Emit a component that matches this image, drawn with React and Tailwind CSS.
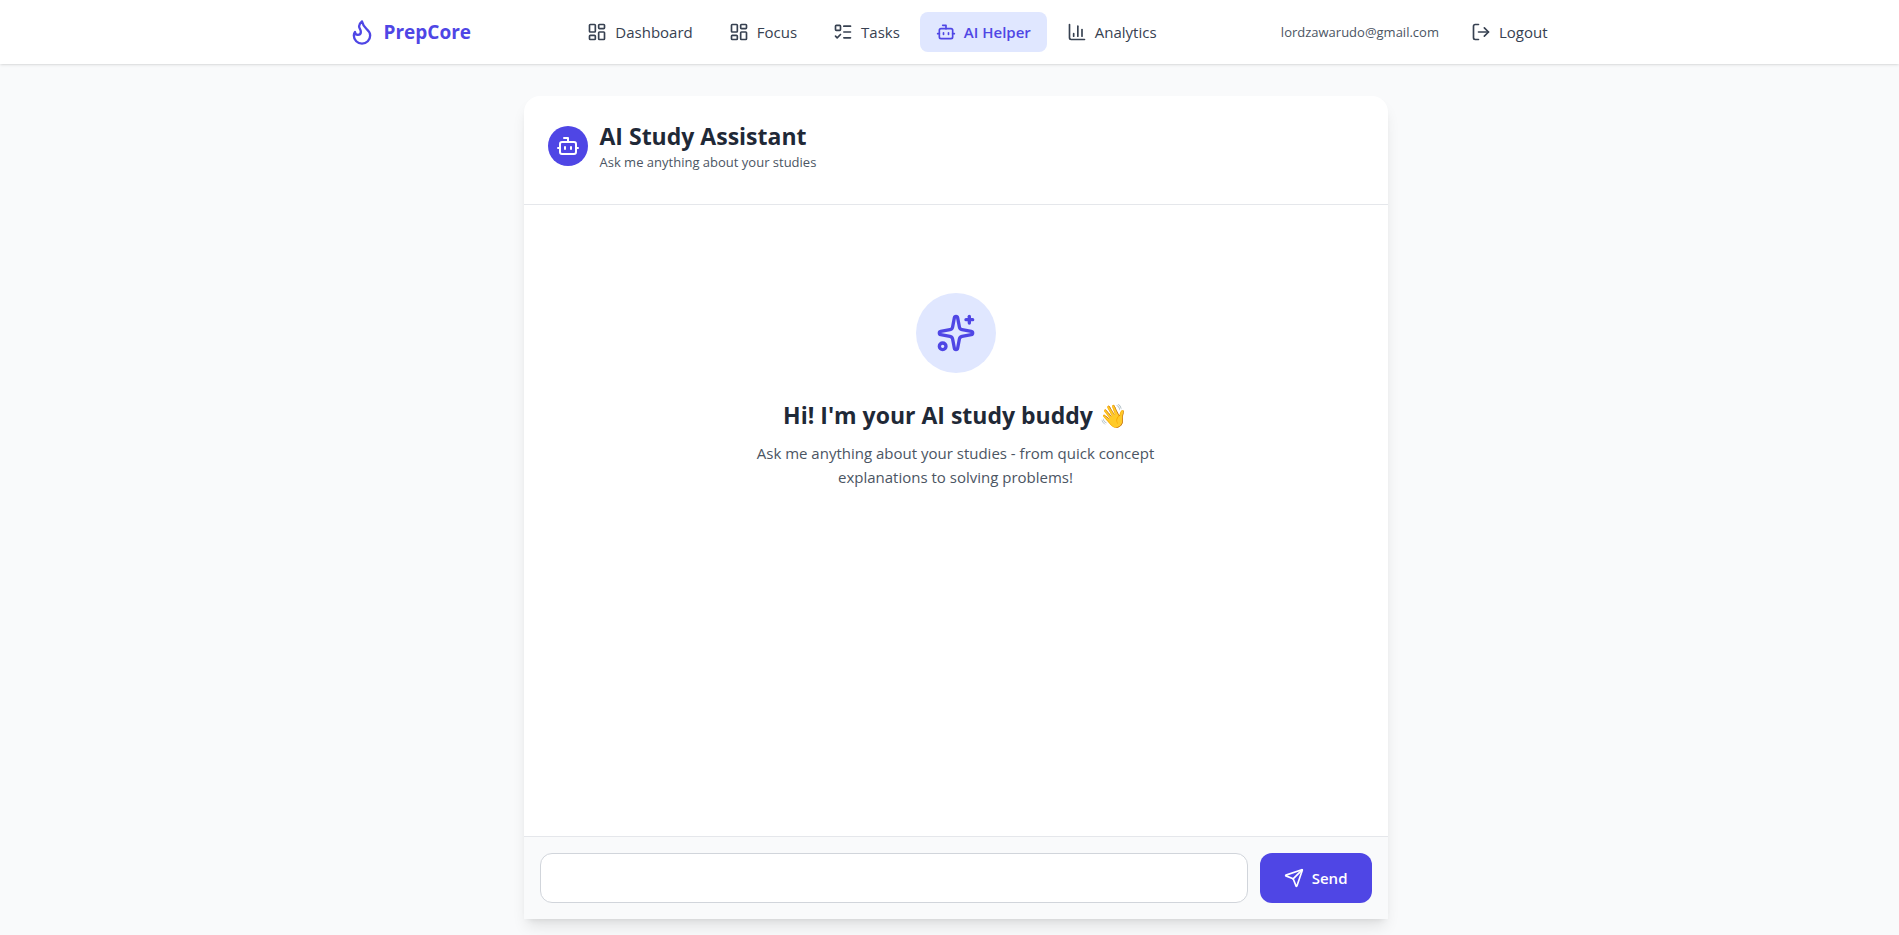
import React, { useState } from 'react';
import { Bot, Flame, LayoutDashboard, ListTodo, LogOut, Send, Sparkles } from 'lucide-react';

// bar chart with short bars inside the axis
const AnalyticsIcon = ({ className }) => (
    <svg
        viewBox="0 0 24 24"
        fill="none"
        stroke="currentColor"
        strokeWidth="2"
        strokeLinecap="round"
        strokeLinejoin="round"
        className={className}
    >
        <path d="M3 3v16a2 2 0 0 0 2 2h16" />
        <path d="M8 17v-3" />
        <path d="M13 17V5" />
        <path d="M18 17V9" />
    </svg>
);

const links = [
    { name: 'Dashboard', icon: LayoutDashboard },
    { name: 'Focus', icon: LayoutDashboard },
    { name: 'Tasks', icon: ListTodo },
    { name: 'AI Helper', icon: Bot, active: true },
    { name: 'Analytics', icon: AnalyticsIcon },
];

const Navbar = () => (
    <header className="bg-white shadow-sm pl-3">
        <div className="max-w-7xl mx-auto px-8 h-16 flex items-center justify-between">
            <a href="#" className="flex items-center gap-2 text-[#4f46e5]">
                <Flame className="w-7 h-7" />
                <span className="text-[19px] leading-7 font-bold">PrepCore</span>
            </a>
            <nav className="flex items-center gap-1 pr-2">
                {links.map(({ name, icon: Icon, active }) => (
                    <a
                        key={name}
                        href="#"
                        className={
                            active
                                ? 'flex items-center gap-2 px-4 py-2 rounded-lg text-[15px] leading-6 font-semibold bg-[#e0e7ff] text-[#4f46e5]'
                                : 'flex items-center gap-2 px-4 py-2 rounded-lg text-[15px] leading-6 text-[#374151] hover:bg-gray-100'
                        }
                    >
                        <Icon className="w-5 h-5" />
                        {name}
                    </a>
                ))}
            </nav>
            <div className="flex items-center gap-4">
                <span className="text-[13px] leading-5 text-[#4b5563]">lordzawarudo@gmail.com</span>
                <button
                    type="button"
                    className="flex items-center gap-2 px-4 py-2 rounded-lg text-[15px] leading-6 text-[#374151] hover:bg-gray-100"
                >
                    <LogOut className="w-5 h-5" />
                    Logout
                </button>
            </div>
        </div>
    </header>
);

const Welcome = () => (
    <div className="flex-1 overflow-y-auto px-6 pt-22 text-center">
        <div className="w-20 h-20 mx-auto mb-6 rounded-full bg-[#e0e7ff] flex items-center justify-center">
            <Sparkles className="w-10 h-10 text-[#4f46e5]" />
        </div>
        <h2 className="mb-2 text-[23px] leading-9 font-bold text-[#1f2937]">
            Hi! I'm your AI study buddy 👋
        </h2>
        <p className="max-w-md mx-auto text-[15px] leading-6 text-[#4b5563]">
            Ask me anything about your studies - from quick concept explanations to solving problems!
        </p>
    </div>
);

export default function App() {
    const [message, setMessage] = useState('');

    return (
        <div className="h-screen flex flex-col bg-gray-50 font-['Open_Sans',sans-serif]">
            <Navbar />
            <div className="flex-1 min-h-0 pl-3 flex">
                <main className="w-full max-w-4xl mx-auto px-4 pt-8 pb-4 flex">
                    <section className="flex-1 flex flex-col bg-white rounded-t-2xl shadow-lg">
                        <div className="flex items-center gap-3 px-6 pt-6 pb-8 border-b border-[#e5e7eb]">
                            <div className="w-10 h-10 rounded-full bg-[#4f46e5] flex items-center justify-center">
                                <Bot className="w-6 h-6 text-white" />
                            </div>
                            <div>
                                <h1 className="text-[23px] leading-8 font-bold text-[#1f2937]">AI Study Assistant</h1>
                                <p className="text-[13px] leading-5 text-[#4b5563]">Ask me anything about your studies</p>
                            </div>
                        </div>
                        <Welcome />
                        <form
                            onSubmit={(e) => e.preventDefault()}
                            className="flex gap-3 p-4 bg-gray-50 border-t border-[#e5e7eb]"
                        >
                            <input
                                type="text"
                                aria-label="Message"
                                value={message}
                                onChange={(e) => setMessage(e.target.value)}
                                className="flex-1 min-w-0 px-4 py-3 text-base bg-white border border-[#d1d5db] rounded-xl focus:outline-none focus:ring-2 focus:ring-indigo-500"
                            />
                            <button
                                type="submit"
                                className="flex items-center gap-2 px-6 py-3 rounded-xl bg-[#4f46e5] text-white text-[15px] leading-6 font-semibold hover:bg-indigo-700"
                            >
                                <Send className="w-5 h-5" />
                                Send
                            </button>
                        </form>
                    </section>
                </main>
            </div>
        </div>
    );
}
